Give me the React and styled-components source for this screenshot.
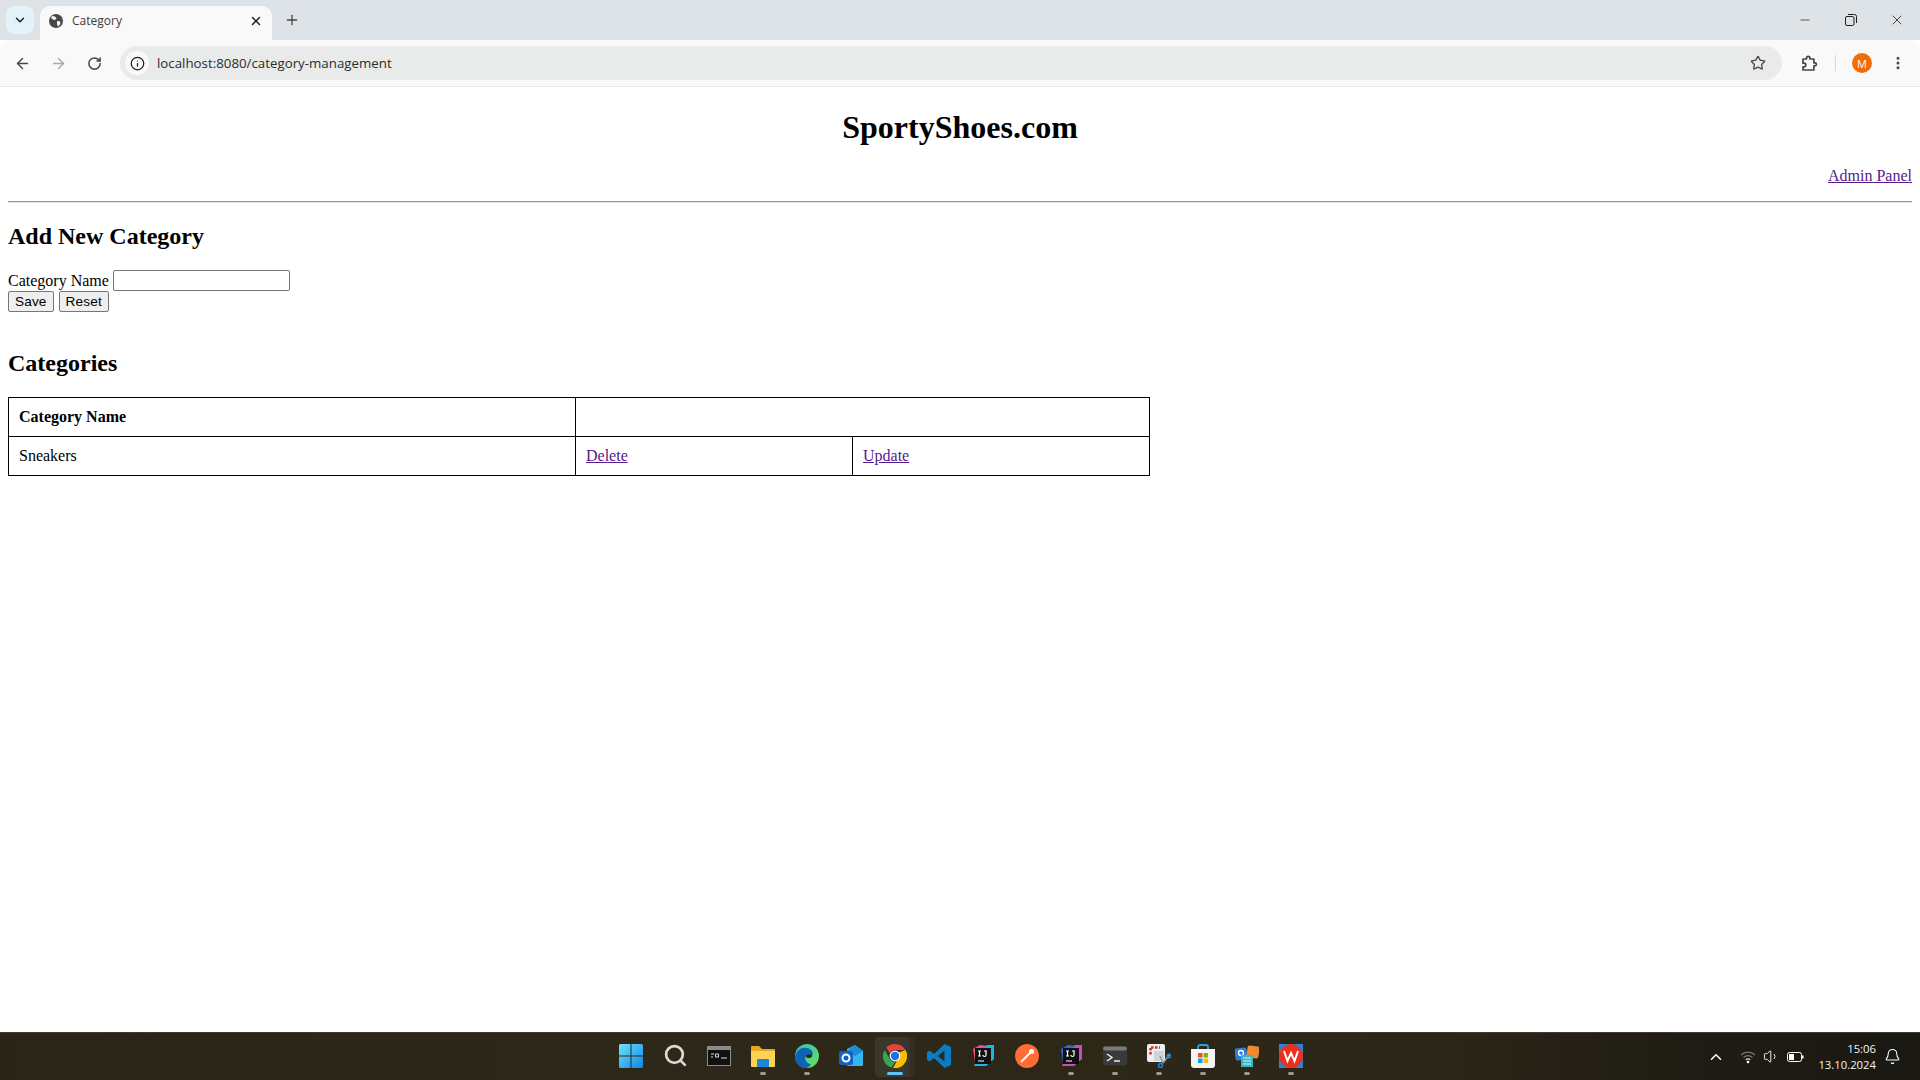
import React from 'react'
import styled, { createGlobalStyle } from 'styled-components'
import { ArrowLeft, ArrowRight, RotateCw, Info, Star, MoreVertical, Plus, X, ChevronDown, Minus, Search, ChevronUp, Bell, Volume1 } from 'lucide-react'

const GlobalStyle = createGlobalStyle`
  html, body { margin: 0; padding: 0; background: #fff; }
  body { width: 1920px; height: 1080px; overflow: hidden; font-family: "Liberation Serif", serif; font-size: 16px; color: #000; }
`

const Screen = styled.div`
  display: flex;
  flex-direction: column;
  width: 1920px;
  height: 1080px;
`

const TabStrip = styled.div`
  display: flex;
  align-items: flex-end;
  height: 40px;
  flex: none;
  background: #dee3e7;
  color: #1f1f1f;
`

const TabList = styled.button`
  display: flex;
  align-items: center;
  justify-content: center;
  width: 28px;
  height: 28px;
  margin: 0 0 6px 6px;
  padding: 0;
  border: 0;
  border-radius: 8px;
  background: #e3f2f9;
  color: #1f1f1f;
`

const Tab = styled.div`
  display: flex;
  align-items: center;
  width: 232px;
  height: 34px;
  margin-left: 6px;
  padding: 0 9px 5px 9px;
  box-sizing: border-box;
  background: #f9f9fa;
  border-radius: 10px 10px 0 0;
  font-family: "Open Sans", sans-serif;
  font-size: 12px;
`

const TabTitle = styled.span`
  flex: 1;
  margin-left: 9px;
  color: #3c3c3c;
`

const NewTab = styled.div`
  display: flex;
  align-items: center;
  height: 34px;
  margin-left: 12px;
  padding-bottom: 6px;
  box-sizing: border-box;
`

const WindowControls = styled.div`
  display: flex;
  align-items: center;
  height: 40px;
  margin-left: auto;
`

const WindowButton = styled.div`
  display: flex;
  align-items: center;
  justify-content: center;
  width: 46px;
  height: 40px;
`

const RestoreIcon = () => (
  <svg width="12" height="12" viewBox="0 0 12 12" fill="none" stroke="#1f1f1f" strokeWidth="1">
    <rect x="0.5" y="2.5" width="8.5" height="9" rx="1.5" />
    <path d="M3 0.5h6.5a2 2 0 0 1 2 2V9" />
  </svg>
)

const Toolbar = styled.div`
  display: flex;
  align-items: center;
  height: 47px;
  flex: none;
  box-sizing: border-box;
  background: #f9f9fa;
  border-radius: 10px 10px 0 0;
  border-bottom: 1px solid #e4e6e8;
  padding-left: 4px;
  color: #474747;
`

const NavButton = styled.div`
  display: flex;
  align-items: center;
  justify-content: center;
  width: 36px;
  height: 34px;
  margin-left: ${p => p.$gap || 0}px;
  color: ${p => (p.$disabled ? '#a8a9aa' : '#474747')};
`

const Omnibox = styled.div`
  display: flex;
  align-items: center;
  width: 1662px;
  height: 34px;
  margin-left: 8px;
  border-radius: 17px;
  background: #e9ebeb;
`

const InfoBadge = styled.div`
  display: flex;
  align-items: center;
  justify-content: center;
  width: 24px;
  height: 24px;
  margin-left: 5px;
  border-radius: 50%;
  background: #f9f9fa;
  color: #1f1f1f;
`

const Url = styled.span`
  margin-left: 8px;
  font-family: "Open Sans", sans-serif;
  font-size: 13.3px;
  color: #2b2b2b;
`

const StarButton = styled.div`
  display: flex;
  margin-left: auto;
  margin-right: 16px;
  color: #474747;
`

const ToolbarDivider = styled.div`
  width: 1px;
  height: 16px;
  margin: 0 16px 0 8px;
  background: #c9dbe4;
`

const Avatar = styled.div`
  display: flex;
  align-items: center;
  justify-content: center;
  width: 20px;
  height: 20px;
  border-radius: 50%;
  background: #f06c05;
  color: #fff;
  font-family: "Open Sans", sans-serif;
  font-size: 11px;
`

const Page = styled.main`
  flex: 1;
  min-height: 0;
  padding: 0 8px;
  background: #fff;
`

const SiteTitle = styled.h1`
  margin: 22px 0 0;
  font-size: 32px;
  line-height: 37px;
  text-align: center;
`

const AdminRow = styled.div`
  margin-top: 21px;
  line-height: 18px;
  text-align: right;
`

const Link = styled.a`
  color: #551a8b;
  text-decoration: underline;
`

const Rule = styled.hr`
  margin: 16px 0 0;
  border: 0;
  border-top: 1px solid #9a9a9a;
  border-bottom: 1px solid #e2e2e2;
`

const SectionTitle = styled.h2`
  margin: ${p => p.$top}px 0 0;
  font-size: 24px;
  line-height: 27px;
`

const FormBlock = styled.form`
  margin: 20px 0 0;
`

const Field = styled.div`
  height: 21px;
  display: flex;
  align-items: center;
`

const FieldLabel = styled.label`
  line-height: 18px;
  margin-right: 4px;
`

const TextBox = styled.input`
  box-sizing: border-box;
  width: 177px;
  height: 21px;
  padding: 1px 2px;
  border: 1px solid #767676;
  border-radius: 2px;
  background: #fff;
`

const Buttons = styled.div`
  display: flex;
  gap: 5px;
`

const Button = styled.button`
  box-sizing: border-box;
  height: 21px;
  padding: 1px 6px;
  border: 1px solid #767676;
  border-radius: 2px;
  background: #efefef;
  color: #000;
  font-family: "Liberation Sans", sans-serif;
  font-size: 13.6px;
  letter-spacing: 0.15px;
`

const Table = styled.table`
  width: 1142px;
  margin-top: 20px;
  border: 1px solid #000;
  border-collapse: collapse;
  table-layout: fixed;
`

const Cell = styled.td`
  height: 39px;
  padding: 0 10px;
  border: 1px solid #000;
  box-sizing: border-box;
  font-weight: ${p => (p.$head ? 700 : 400)};
`

const Taskbar = styled.footer`
  display: flex;
  align-items: center;
  height: 48px;
  flex: none;
  background: linear-gradient(90deg, #2a2518, #2e2819 40%, #2c2618 75%, #1f1c14 88%, #1a1812);
  border-top: 1px solid #3e3b35;
  box-sizing: border-box;
`

const TaskIcons = styled.div`
  display: flex;
  align-items: center;
  margin-left: 609px;
`

const TaskSlot = styled.div`
  position: relative;
  z-index: 0;
  display: flex;
  align-items: center;
  justify-content: center;
  width: 44px;
  height: 40px;
  padding-bottom: 2px;
  box-sizing: border-box;

  ${p => p.$active && `
    &::before {
      content: '';
      position: absolute;
      z-index: -1;
      top: 0;
      bottom: 0;
      left: 2px;
      width: 35px;
      border-radius: 4px;
      background: #3b362b;
    }
    &::after {
      content: '';
      position: absolute;
      z-index: -2;
      top: 0;
      bottom: 0;
      left: 30px;
      width: 12px;
      border-radius: 4px;
      background: #332e22;
    }
  `}
`

const Pip = styled.span`
  position: absolute;
  left: 50%;
  bottom: 2px;
  width: ${p => (p.$active ? 16 : 6)}px;
  height: 3px;
  transform: translateX(-50%);
  border-radius: 2px;
  background: ${p => (p.$active ? '#5cc7f5' : '#9a9a96')};
`

const Tray = styled.div`
  display: flex;
  align-items: center;
  margin-left: auto;
  margin-right: 19px;
  color: #fff;
`

const TrayGap = styled.span`
  width: ${p => p.$w}px;
`

const Clock = styled.div`
  margin: 0 0 0 14px;
  font-family: "Open Sans", sans-serif;
  font-size: 11.3px;
  line-height: 16px;
  text-align: right;
  color: #f4f4f4;
`

const ExtensionIcon = () => (
  <svg width="17" height="17" viewBox="0 0 17 17" fill="none" stroke="#474747" strokeWidth="1.7" strokeLinejoin="round">
    <path d="M2 4h3.500V3a1.700 1.700 0 0 1 3.400 0v1h4v3.800h1a1.500 1.500 0 0 1 0 3h-1V15H2v-3.200h1a1.700 1.700 0 0 0 0-3.600H2z" />
  </svg>
)

const WindowsLogo = () => (
  <svg width="24" height="24" viewBox="0 0 24 24">
    <defs>
      <linearGradient id="win" x1="0" y1="0" x2="1" y2="1">
        <stop offset="0" stopColor="#6fe3fb" />
        <stop offset="1" stopColor="#0c86e4" />
      </linearGradient>
    </defs>
    <path fill="url(#win)" d="M0 1.5A1.5 1.5 0 0 1 1.5 0H11.5V11.5H0ZM12.5 0H22.5A1.5 1.5 0 0 1 24 1.5V11.5H12.5ZM0 12.5H11.5V24H1.5A1.5 1.5 0 0 1 0 22.5ZM12.5 12.5H24V22.5A1.5 1.5 0 0 1 22.5 24H12.5Z" />
  </svg>
)

const Console = () => (
  <svg width="24" height="20" viewBox="0 0 24 20">
    <rect x="0.5" y="0.5" width="23" height="19" fill="#111" stroke="#8b8b8b" />
    <rect x="1" y="1" width="22" height="3" fill="#8b8b8b" />
    <path d="M4 8h3M4 11h2M8.5 8h3v3h-3zM14 12h6" stroke="#ddd" fill="none" />
  </svg>
)

const Folder = () => (
  <svg width="24" height="24" viewBox="0 0 24 24">
    <path fill="#e8a81f" d="M0 3a1 1 0 0 1 1-1h7l3 3h12a1 1 0 0 1 1 1v4H0z" />
    <path fill="#fcd354" d="M0 7h24v15a1 1 0 0 1-1 1H1a1 1 0 0 1-1-1z" />
    <rect x="6" y="15" width="12" height="8" rx="1" fill="#1d88d8" />
  </svg>
)

const Edge = () => (
  <svg width="24" height="24" viewBox="0 0 24 24">
    <defs>
      <linearGradient id="edgeTop" x1="0" y1="0" x2="1" y2="1">
        <stop offset="0" stopColor="#2fc5c0" />
        <stop offset="1" stopColor="#6ddc58" />
      </linearGradient>
    </defs>
    <circle cx="12" cy="12" r="12" fill="url(#edgeTop)" />
    <path fill="#0f63b5" d="M0 13C1 6 7 3 12 4c5 1 7 5 5 8h-6c-2 3 0 7 5 8.500C14 23 12 24 11 24 4.500 24 0 19 0 13z" />
    <path fill="#2d2618" d="M11 12c1-2 6-2 6 0 0 1-1 2-3 2-2 0-3-1-3-2z" />
  </svg>
)

const Outlook = () => (
  <svg width="24" height="24" viewBox="0 0 24 24">
    <path fill="#36b5ee" d="M8 5l8-4 8 6v14a1 1 0 0 1-1 1H9a1 1 0 0 1-1-1z" />
    <path fill="#1a8cd8" d="M16 1l8 6-8 5-8-5z" />
    <rect x="0" y="7" width="14" height="14" rx="2" fill="#0f63c4" />
    <circle cx="7" cy="14" r="3.500" fill="none" stroke="#fff" strokeWidth="2" />
  </svg>
)

const Chrome = () => (
  <svg width="24" height="24" viewBox="0 0 24 24">
    <path fill="#ea4335" d="M12 0a12 12 0 0 1 10.400 6H12a6 6 0 0 0-5.200 3L3.300 3.500A12 12 0 0 1 12 0z" />
    <path fill="#34a853" d="M1.600 6l5.200 9a6 6 0 0 0 5.200 3l-3.500 5.600A12 12 0 0 1 1.600 6z" />
    <path fill="#fbbc04" d="M22.400 6A12 12 0 0 1 10 23.900L15 15a6 6 0 0 0 0-6z" />
    <circle cx="12" cy="12" r="5.400" fill="#fff" />
    <circle cx="12" cy="12" r="4.200" fill="#1a73e8" />
  </svg>
)

const VSCode = () => (
  <svg width="24" height="24" viewBox="0 0 24 24">
    <path fill="#0a7cc6" d="M17.500 0L24 3v18l-6.500 3L7 14l-4.500 3.500L0 16v-8l2.500-1.500L7 10zM17.500 6.500L11 12l6.500 5.500z" />
  </svg>
)

const IdeaBox = ({ a, b }) => (
  <svg width="24" height="24" viewBox="0 0 24 24">
    <path fill={a} d="M2 5l7-4 8 1-4 8-9 8z" />
    <path fill={b} d="M16 1h7v14l-8 7H3l3-8z" />
    <rect x="4" y="4" width="16" height="16" fill="#111" />
    <path d="M7 7h3M8.500 7v5M7 12h3M13 7h3M15 7v4a1.500 1.500 0 0 1-3 0M7 17h6" stroke="#fff" strokeWidth="1.200" fill="none" />
  </svg>
)

const Postman = () => (
  <svg width="24" height="24" viewBox="0 0 24 24">
    <circle cx="12" cy="12" r="12" fill="#ff6c37" />
    <path d="M6 18l6-6 4-4" stroke="#fff" strokeWidth="1.800" fill="none" />
    <circle cx="16.500" cy="7.500" r="2.500" fill="#fff" />
  </svg>
)

const Terminal = () => (
  <svg width="24" height="20" viewBox="0 0 24 20">
    <rect width="24" height="19" y="0.500" rx="2" fill="#3a3a3a" />
    <rect width="24" height="4" y="0.500" rx="2" fill="#7a7a7a" />
    <path d="M4 8l5 3.500-5 3.500" stroke="#eee" strokeWidth="1.500" fill="none" />
    <path d="M11 15h6" stroke="#eee" strokeWidth="1.500" />
  </svg>
)

const Snip = () => (
  <svg width="24" height="24" viewBox="0 0 24 24">
    <rect width="18" height="18" rx="2" fill="#eceff1" />
    <path d="M4 3.500h9M3.500 4v8" stroke="#c9321f" strokeWidth="2.500" strokeDasharray="2.500 1.500" fill="none" />
    <rect x="7" y="7" width="10" height="10" fill="#cfd4d8" />
    <path d="M13 12l3 7M23 10l-7 9" stroke="#8d9aa3" strokeWidth="1.500" />
    <circle cx="13.500" cy="21.500" r="2" fill="none" stroke="#1e88d8" strokeWidth="1.500" />
    <circle cx="22" cy="12" r="1.800" fill="none" stroke="#1e88d8" strokeWidth="1.500" />
  </svg>
)

const Store = () => (
  <svg width="24" height="24" viewBox="0 0 24 24">
    <path d="M7 6V3a2 2 0 0 1 2-2h6a2 2 0 0 1 2 2v3" stroke="#2aa3e6" strokeWidth="1.800" fill="none" />
    <path fill="#f4f4f4" d="M0 5h24v16a3 3 0 0 1-3 3H3a3 3 0 0 1-3-3z" />
    <rect x="7" y="9" width="4.500" height="4.500" fill="#f25022" />
    <rect x="12.500" y="9" width="4.500" height="4.500" fill="#7fba00" />
    <rect x="7" y="14.500" width="4.500" height="4.500" fill="#00a4ef" />
    <rect x="12.500" y="14.500" width="4.500" height="4.500" fill="#ffb900" />
  </svg>
)

const Apps = () => (
  <svg width="24" height="24" viewBox="0 0 24 24">
    <rect x="0" y="4" width="12" height="12" rx="2" fill="#2a7de1" transform="rotate(-8 6 10)" />
    <rect x="12" y="2" width="12" height="12" rx="2" fill="#ee8a33" transform="rotate(8 18 8)" />
    <circle cx="6" cy="9" r="2.500" fill="none" stroke="#fff" strokeWidth="1.300" />
    <rect x="6" y="11" width="12" height="12" fill="#38b6c6" />
    <path d="M8 14h8M8 17h8M8 20h8" stroke="#d5f3f7" />
  </svg>
)

const Wps = () => (
  <svg width="24" height="24" viewBox="0 0 24 24">
    <rect width="24" height="24" fill="#2187e0" />
    <circle cx="12" cy="12" r="12" fill="#e8321f" />
    <path d="M5 7l3.500 10L12 9l3.500 8L19 7" stroke="#fff" strokeWidth="2" fill="none" />
  </svg>
)

const Wifi = () => (
  <svg width="16" height="14" viewBox="0 0 16 14" fill="none">
    <path d="M1 5a10 10 0 0 1 14 0" stroke="#777" strokeWidth="1.200" />
    <path d="M3.500 7.500a6.500 6.500 0 0 1 9 0" stroke="#777" strokeWidth="1.200" />
    <path d="M5.800 9.800a3.200 3.200 0 0 1 4.400 0" stroke="#ddd" strokeWidth="1.200" />
    <circle cx="8" cy="12" r="1.300" fill="#fff" />
  </svg>
)

const Battery = () => (
  <svg width="17" height="12" viewBox="0 0 17 12" fill="none">
    <rect x="0.500" y="1.500" width="14" height="9" rx="2" stroke="#fff" />
    <rect x="2" y="3" width="5" height="6" fill="#fff" />
    <rect x="15" y="4.500" width="1.500" height="3" fill="#fff" />
  </svg>
)

const taskApps = [
  { key: 'win', icon: <WindowsLogo /> },
  { key: 'search', icon: <Search size={25} color="#d9d9d9" strokeWidth={2.6} /> },
  { key: 'console', icon: <Console /> },
  { key: 'folder', icon: <Folder />, open: true },
  { key: 'edge', icon: <Edge />, open: true },
  { key: 'outlook', icon: <Outlook /> },
  { key: 'chrome', icon: <Chrome />, active: true },
  { key: 'vscode', icon: <VSCode /> },
  { key: 'idea1', icon: <IdeaBox a="#f0508c" b="#17b7e8" /> },
  { key: 'postman', icon: <Postman /> },
  { key: 'idea2', icon: <IdeaBox a="#2a6de8" b="#d04ac8" />, open: true },
  { key: 'term', icon: <Terminal />, open: true },
  { key: 'snip', icon: <Snip />, open: true },
  { key: 'store', icon: <Store />, open: true },
  { key: 'apps', icon: <Apps />, open: true },
  { key: 'wps', icon: <Wps />, open: true },
]

const Globe = () => (
  <svg width="14" height="14" viewBox="0 0 14 14">
    <circle cx="7" cy="7" r="7" fill="#474747" />
    <path fill="#f9f9fa" d="M3 2l3 .5 1.500 2L6 6 4 5.500 2 4zM8 7l3.500.5L11 10.500 9 12.500l-1-2z" />
  </svg>
)

export default function App() {
  return (
    <>
      <GlobalStyle />
      <Screen>
        <TabStrip>
          <TabList><ChevronDown size={14} strokeWidth={2.5} /></TabList>
          <Tab>
            <Globe />
            <TabTitle>Category</TabTitle>
            <X size={14} strokeWidth={2.5} />
          </Tab>
          <NewTab><Plus size={16} color="#474747" strokeWidth={2} /></NewTab>
          <WindowControls>
            <WindowButton><Minus size={14} strokeWidth={1.2} /></WindowButton>
            <WindowButton><RestoreIcon /></WindowButton>
            <WindowButton><X size={16} strokeWidth={1.2} /></WindowButton>
          </WindowControls>
        </TabStrip>
        <Toolbar>
          <NavButton><ArrowLeft size={17} /></NavButton>
          <NavButton $disabled><ArrowRight size={17} /></NavButton>
          <NavButton><RotateCw size={15} strokeWidth={2.4} /></NavButton>
          <Omnibox>
            <InfoBadge><Info size={15} /></InfoBadge>
            <Url>localhost:8080/category-management</Url>
            <StarButton><Star size={16} strokeWidth={2} /></StarButton>
          </Omnibox>
          <NavButton $gap={9}><ExtensionIcon /></NavButton>
          <ToolbarDivider />
          <Avatar>M</Avatar>
          <NavButton $gap={8}><MoreVertical size={16} strokeWidth={2.5} /></NavButton>
        </Toolbar>
        <Page>
          <SiteTitle>SportyShoes.com</SiteTitle>
          <AdminRow><Link href="#admin">Admin Panel</Link></AdminRow>
          <Rule />
          <SectionTitle $top={20}>Add New Category</SectionTitle>
          <FormBlock>
            <Field>
              <FieldLabel>Category Name</FieldLabel>
              <TextBox type="text" />
            </Field>
            <Buttons>
              <Button type="button">Save</Button>
              <Button type="button">Reset</Button>
            </Buttons>
          </FormBlock>
          <SectionTitle $top={38}>Categories</SectionTitle>
          <Table>
            <colgroup>
              <col style={{ width: 567 }} />
              <col style={{ width: 277 }} />
              <col />
            </colgroup>
            <tbody>
              <tr>
                <Cell $head>Category Name</Cell>
                <Cell colSpan={2} />
              </tr>
              <tr>
                <Cell>Sneakers</Cell>
                <Cell><Link href="#delete">Delete</Link></Cell>
                <Cell><Link href="#update">Update</Link></Cell>
              </tr>
            </tbody>
          </Table>
        </Page>
        <Taskbar>
          <TaskIcons>
            {taskApps.map(app => (
              <TaskSlot key={app.key} $active={app.active}>
                {app.icon}
                {(app.open || app.active) && <Pip $active={app.active} />}
              </TaskSlot>
            ))}
          </TaskIcons>
          <Tray>
            <ChevronUp size={18} />
            <TrayGap $w={15} />
            <Wifi />
            <TrayGap $w={7} />
            <Volume1 size={17} strokeWidth={1.3} />
            <TrayGap $w={7} />
            <Battery />
            <Clock>15:06<br />13.10.2024</Clock>
            <TrayGap $w={8} />
            <Bell size={17} strokeWidth={1.5} />
          </Tray>
        </Taskbar>
      </Screen>
    </>
  )
}
